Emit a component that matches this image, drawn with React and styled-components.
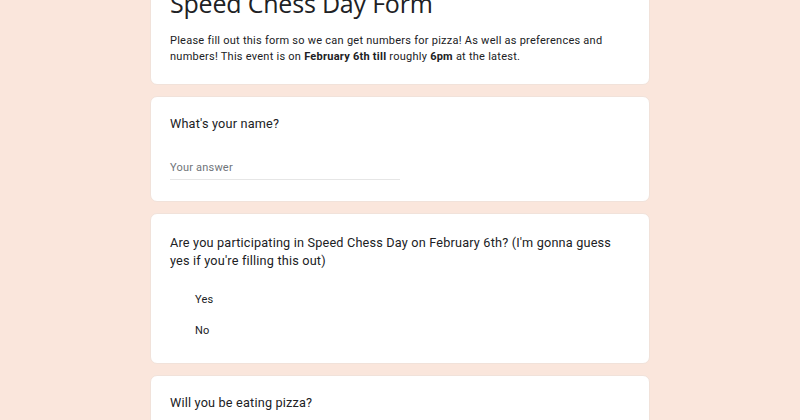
import React from 'react'
import styled, { createGlobalStyle } from 'styled-components'

const Global = createGlobalStyle`
  body {
    margin: 0;
    background: #fae6dc;
    font-family: Roboto, "Liberation Sans", sans-serif;
    color: #202124;
  }
`

const Pagina = styled.div`
  width: 500px;
  margin: -12px auto 0 auto;
  display: flex;
  flex-direction: column;
  gap: 11px;
`

const Card = styled.div`
  background: #fff;
  border-radius: 7px;
  border: 1px solid #f1e2da;
  padding: ${(p) => p.$pad || '18px 19px 21px 19px'};
  display: flex;
  flex-direction: column;
`

const Titulo = styled.h1`
  margin: -4px 0 0 0;
  font-family: "Open Sans", sans-serif;
  font-weight: 400;
  font-size: 25px;
  line-height: 36px;
  letter-spacing: -0.2px;
  color: #202124;
`

const Descricao = styled.p`
  margin: 12px 0 0 0;
  font-size: 11px;
  line-height: 16px;
  letter-spacing: 0.25px;
  color: #202124;

  b {
    font-weight: 700;
  }
`

const Pergunta = styled.div`
  font-family: Roboto, sans-serif;
  font-size: 12.7px;
  line-height: 18px;
  letter-spacing: 0.18px;
  color: #202124;
`

const Resposta = styled.div`
  width: 230px;
  margin-top: 27px;
  padding-bottom: 3px;
  border-bottom: 1px solid #e6e6e6;
  font-size: 11px;
  line-height: 16px;
  letter-spacing: 0.2px;
  color: #70757a;
`

const Opcoes = styled.div`
  display: flex;
  flex-direction: column;
  gap: 15px;
  margin-top: 22px;
  padding-left: 25px;
`

const Opcao = styled.div`
  font-size: 11px;
  line-height: 16px;
  letter-spacing: 0.2px;
  color: #202124;
`

const App = () => {
  return (
    <>
      <Global />
      <Pagina>
        <Card $pad="0 19px 19px 19px">
          <Titulo>Speed Chess Day Form</Titulo>
          <Descricao>
            Please fill out this form so we can get numbers for pizza! As well as preferences and
            numbers! This event is on <b>February 6th till</b> roughly <b>6pm</b> at the latest.
          </Descricao>
        </Card>
        <Card>
          <Pergunta>What's your name?</Pergunta>
          <Resposta>Your answer</Resposta>
        </Card>
        <Card $pad="20px 19px 24px 19px">
          <Pergunta>
            Are you participating in Speed Chess Day on February 6th? (I'm gonna guess yes if
            you're filling this out)
          </Pergunta>
          <Opcoes>
            <Opcao>Yes</Opcao>
            <Opcao>No</Opcao>
          </Opcoes>
        </Card>
        <Card>
          <Pergunta>Will you be eating pizza?</Pergunta>
        </Card>
      </Pagina>
    </>
  )
}

export default App
